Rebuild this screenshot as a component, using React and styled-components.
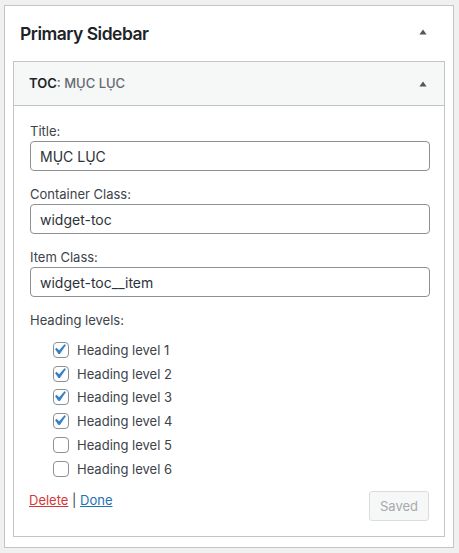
import React from "react";
import styled, { createGlobalStyle } from "styled-components";

const Global = createGlobalStyle`
  html, body { margin: 0; padding: 0; background: #f0f0f1; }
  body { font-family: Inter, "Noto Sans", "Liberation Sans", sans-serif; color: #3c434a; font-size: 13px; }
  * { box-sizing: border-box; }
`;

const Card = styled.div`
  margin: 5px 0 0 4px;
  width: 450px;
  background: #fff;
  border: 1px solid #c3c4c7;
  padding-bottom: 10px;
`;

const CardHead = styled.div`
  height: 55px;
  display: flex;
  align-items: center;
  justify-content: space-between;
  padding: 0 26px 0 15px;
`;

const SidebarTitle = styled.h2`
  margin: 0;
  font-size: 17.5px;
  font-weight: 600;
  color: #1d2327;
  letter-spacing: -0.5px;
  line-height: 1;
`;

const Toggle = styled.svg`
  display: block;
  width: 8px;
  height: 6px;
  margin-top: ${(p) => p.$dy || 0}px;
`;

const Widget = styled.div`
  margin: 0 8px;
  border: 1px solid #c3c4c7;
`;

const WidgetHead = styled.div`
  height: 44px;
  display: flex;
  align-items: center;
  justify-content: space-between;
  padding: 0 17px 0 15px;
  background: #f6f7f7;
  border-bottom: 1px solid #c3c4c7;
`;

const WidgetTitle = styled.h3`
  margin: 0;
  font-size: 13px;
  font-weight: 600;
  color: #1d2327;
  line-height: 1;
`;

const InTitle = styled.span`
  font-weight: 500;
  color: #646970;
`;

const Body = styled.div`
  padding: 15px 14px 15px 16px;
`;

const Field = styled.div`
  margin-bottom: 13px;
`;

const Label = styled.label`
  display: block;
  line-height: 20px;
  font-size: 13px;
  color: #3c434a;
`;

const Input = styled.input`
  display: block;
  width: 100%;
  height: 30px;
  border: 1px solid #8c8f94;
  border-radius: 4px;
  padding: 0 9px;
  font: inherit;
  font-size: 14px;
  color: #2c3338;
  background: #fff;
  outline: none;
`;

const LevelList = styled.div`
  margin-top: 8px;
  padding-left: 23px;
`;

const Row = styled.label`
  height: 23.75px;
  display: flex;
  align-items: center;
  gap: 8px;
  font-size: 13px;
  color: #3c434a;
`;

const Box = styled.span`
  position: relative;
  width: 16px;
  height: 16px;
  border: 1px solid #8c8f94;
  border-radius: 4px;
  background: #fff;
  flex: none;
`;

const Check = styled.svg`
  position: absolute;
  width: 21px;
  height: 21px;
  left: -5px;
  top: -4px;
`;

const Footer = styled.div`
  margin-top: 8px;
  display: flex;
  justify-content: space-between;
  align-items: flex-start;
`;

const Links = styled.div`
  padding-top: 2px;
  line-height: 19px;
  font-size: 13px;
  color: #3c434a;
  margin-left: -1px;
`;

const Sep = styled.span`
  color: #3c434a;
`;

const A = styled.a`
  color: ${(p) => (p.$danger ? "#d63638" : "#2271b1")};
  text-decoration: underline;
`;

const Saved = styled.button`
  margin-top: 2px;
  margin-right: 1px;
  height: 30px;
  padding: 0 10px;
  border: 1px solid #dcdcde;
  border-radius: 3px;
  background: #f6f7f7;
  color: #a7aaad;
  font: inherit;
  font-size: 13px;
`;

const Arrow = ({ dy }) => (
  <Toggle viewBox="0 0 8 6" $dy={dy}>
    <path d="M4 0.5 L7.6 5.5 L0.4 5.5 Z" fill="#50575e" />
  </Toggle>
);

const levels = [1, 2, 3, 4, 5, 6];
const checked = { 1: true, 2: true, 3: true, 4: true };

export default function App() {
  return (
    <>
      <Global />
      <Card>
        <CardHead>
          <SidebarTitle>Primary Sidebar</SidebarTitle>
          <Arrow dy={-4} />
        </CardHead>
        <Widget>
          <WidgetHead>
            <WidgetTitle>
              TOC<InTitle>: MỤC LỤC</InTitle>
            </WidgetTitle>
            <Arrow dy={1} />
          </WidgetHead>
          <Body>
            <Field>
              <Label>Title:</Label>
              <Input defaultValue="MỤC LỤC" />
            </Field>
            <Field>
              <Label>Container Class:</Label>
              <Input defaultValue="widget-toc" />
            </Field>
            <Field>
              <Label>Item Class:</Label>
              <Input defaultValue="widget-toc__item" />
            </Field>
            <Label>Heading levels:</Label>
            <LevelList>
              {levels.map((l) => (
                <Row key={l}>
                  <Box>
                    {checked[l] && (
                      <Check viewBox="0 0 20 20">
                        <path
                          d="M14.83 4.89l1.34.94-5.81 8.38H9.02L5.78 9.67l1.34-1.25 2.57 2.4z"
                          fill="#3582c4"
                        />
                      </Check>
                    )}
                  </Box>
                  Heading level {l}
                </Row>
              ))}
            </LevelList>
            <Footer>
              <Links>
                <A $danger href="#">Delete</A>
                <Sep> | </Sep>
                <A href="#">Done</A>
              </Links>
              <Saved>Saved</Saved>
            </Footer>
          </Body>
        </Widget>
      </Card>
    </>
  );
}
